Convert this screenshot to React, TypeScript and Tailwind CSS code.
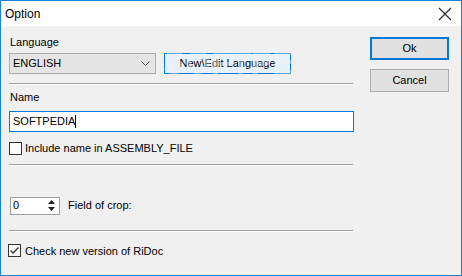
import React from "react";

const font = { fontFamily: '"Liberation Sans", Arial, sans-serif' };

function Separator({ className = "" }: { className?: string }) {
    return <div className={"h-[2px] w-[344px] border-t border-[#a0a0a0] border-b border-b-white " + className} />;
}

function CheckBox({ checked }: { checked?: boolean }) {
    return (
        <div className="w-[13px] h-[13px] border border-[#333333] bg-white flex items-center justify-center">
            {checked && (
                <svg width="11" height="11" viewBox="0 0 11 11">
                    <path d="M1.5 5.5 L4 8 L9.5 2.5" fill="none" stroke="#333333" strokeWidth="1.3" />
                </svg>
            )}
        </div>
    );
}

export default function App() {
    return (
        <div
            className="relative w-[462px] h-[276px] border border-[#1883d7] bg-[#f0f0f0] text-[11px] text-black overflow-hidden"
            style={font}
        >
            {/* title bar */}
            <div className="h-[25px] bg-white flex items-center justify-between pl-[4px] pr-[9px]">
                <span className="text-[12px] leading-none">Option</span>
                <svg width="14" height="14" viewBox="0 0 14 14">
                    <path d="M1 1 L13 13 M13 1 L1 13" stroke="#222" strokeWidth="1.1" />
                </svg>
            </div>

            <div className="flex pl-[8px]">
                {/* left column */}
                <div className="w-[345px] flex flex-col">
                    <div className="mt-[10px] leading-[13px] pl-[1px]">Language</div>
                    <div className="mt-[4px] flex items-center gap-[8px]">
                        <div className="w-[147px] h-[21px] bg-[#e5e5e5] border border-[#adadad] flex items-center justify-between pl-[3px] pr-[5px]">
                            <span>ENGLISH</span>
                            <svg width="9" height="6" viewBox="0 0 9 6">
                                <path d="M0.5 0.5 L4.5 4.5 L8.5 0.5" fill="none" stroke="#555" strokeWidth="1" />
                            </svg>
                        </div>
                        <div className="w-[127px] h-[21px] bg-[#e5f1fb] border border-[#0078d7] flex items-center justify-center">
                            New\Edit Language
                        </div>
                    </div>
                    <Separator className="mt-[9px]" />
                    <div className="mt-[6px] leading-[13px] pl-[1px]">Name</div>
                    <div className="mt-[7px] w-[345px] h-[21px] bg-white border border-[#0078d7] flex items-center pl-[3px]">
                        SOFTPEDIA
                        <span className="w-px h-[13px] bg-black" />
                    </div>
                    <div className="mt-[8px] flex items-center gap-[3px]">
                        <CheckBox />
                        <span>Include name in ASSEMBLY_FILE</span>
                    </div>
                    <Separator className="mt-[7px]" />
                    <div className="mt-[31px] flex items-center ml-[1px]">
                        <div className="w-[50px] h-[18px] bg-white border border-[#a0a0a0] flex items-center">
                            <span className="flex-1 pl-[2px]">0</span>
                            <div className="w-[16px] h-full flex flex-col items-center justify-center gap-[3px]">
                                <svg width="7" height="4" viewBox="0 0 7 4">
                                    <path d="M0 4 L3.5 0 L7 4 Z" fill="#222" />
                                </svg>
                                <svg width="7" height="4" viewBox="0 0 7 4">
                                    <path d="M0 0 L3.5 4 L7 0 Z" fill="#222" />
                                </svg>
                            </div>
                        </div>
                        <span className="ml-[8px]">Field of crop:</span>
                    </div>
                    <Separator className="mt-[15px]" />
                    <div className="mt-[11px] flex items-center gap-[3px] -ml-[1px]">
                        <CheckBox checked />
                        <span className="ml-[1px]">Check new version of RiDoc</span>
                    </div>
                </div>

                {/* right column */}
                <div className="ml-[16px] mt-[11px] flex flex-col gap-[9px]">
                    <div className="w-[79px] h-[23px] bg-[#e1e1e1] border-2 border-[#0078d7] flex items-center justify-center">
                        Ok
                    </div>
                    <div className="w-[79px] h-[23px] bg-[#e1e1e1] border border-[#adadad] flex items-center justify-center">
                        Cancel
                    </div>
                </div>
            </div>

            {/* watermark */}
            <div
                className="absolute left-[162px] top-[44px] text-[34px] leading-none font-bold tracking-tight text-white/40 pointer-events-none select-none"
                style={{ textShadow: "0 0 1px rgba(0,0,0,0.04)" }}
            >
                SOFTPEDIA<sup className="text-[8px]">®</sup>
            </div>
        </div>
    );
}
